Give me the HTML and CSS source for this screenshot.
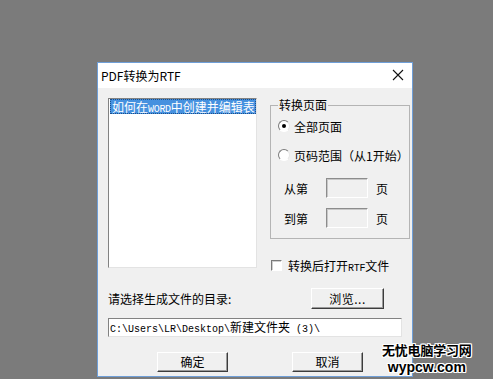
FILE: index.html
```html
<!DOCTYPE html>
<html lang="zh-CN">
<head>
  <meta charset="UTF-8">
  <meta name="viewport" content="width=device-width, initial-scale=1.0">
  <title>PDF转换为RTF</title>
  <link rel="stylesheet" href="styles.css">
</head>
<body>

  <!-- Dialog -->
  <div class="dialog">
    <div class="titlebar">
      <span class="title">PDF转换为RTF</span>
      <svg class="close" width="12" height="12" viewBox="0 0 12 12">
        <path d="M1 1L11 11M11 1L1 11" stroke="#111" stroke-width="1.1" fill="none"/>
      </svg>
    </div>

    <div class="client">
      <div class="top-row">
        <!-- Liste links -->
        <div class="listbox">
          <div class="item selected">如何在<span class="narrow">WORD</span>中创建并编辑表</div>
        </div>

        <!-- Optionen rechts -->
        <div class="side">
          <fieldset class="group">
            <legend>转换页面</legend>
            <div class="option first"><span class="radio checked"></span><span>全部页面</span></div>
            <div class="option second"><span class="radio"></span><span>页码范围（从1开始）</span></div>
            <div class="range first-range">
              <span class="range-label">从第</span>
              <span class="field"></span>
              <span>页</span>
            </div>
            <div class="range">
              <span class="range-label">到第</span>
              <span class="field"></span>
              <span>页</span>
            </div>
          </fieldset>
          <div class="check"><span class="box"></span><span>转换后打开<span class="narrow">RTF</span>文件</span></div>
        </div>
      </div>

      <div class="dir-row">
        <span>请选择生成文件的目录:</span>
        <button class="btn browse">浏览...</button>
      </div>

      <div class="path">C:\Users\LR\Desktop\<span class="cjk">新建文件夹</span> (3)\</div>

      <div class="actions">
        <button class="btn ok">确定</button>
        <button class="btn cancel">取消</button>
      </div>
    </div>
  </div>

  <div class="watermark">
    <div class="wm-cn">无忧电脑学习网</div>
    <div class="wm-en">wypcw.com</div>
  </div>

</body>
</html>
```

FILE: styles.css
```css
/* Reset */
* { box-sizing: border-box; margin: 0; padding: 0; }
body {
  width: 493px;
  height: 379px;
  overflow: hidden;
  background: #7b7b7b;
  font-family: "Noto Sans CJK SC", "DejaVu Sans", sans-serif;
  font-size: 12px;
  color: #000;
  position: relative;
}
/* Fenster */
.dialog {
  margin: 62px 0 0 97px;
  width: 316px;
  height: 315px;
  border: 1px solid #6f9fd8;
  background: #f0f0f0;
  display: flex;
  flex-direction: column;
}
.titlebar {
  height: 25px;
  background: #fff;
  display: flex;
  align-items: center;
  justify-content: space-between;
  padding: 0 8px 0 3px;
}
.title {
  font-size: 12px;
  line-height: 25px;
}
.close { display: block; margin-top: -1px; }
/* Inhalt */
.client {
  flex: 1;
  padding: 10px 9px 0 10px;
}
.top-row {
  display: flex;
  gap: 13px;
}
.listbox {
  width: 149px;
  height: 170px;
  background: #fff;
  border: 1px solid;
  border-color: #828282 #e3e3e3 #e3e3e3 #828282;
  padding: 0 0 0 1px;
}
.item {
  height: 15px;
  line-height: 15px;
  font-size: 12px;
  white-space: nowrap;
  padding-left: 2px;
}
.selected {
  background: #4691df;
  color: #fff;
  outline: 1px dotted #1d4f8a;
  outline-offset: -1px;
}
.narrow {
  font-family: "Liberation Mono", monospace;
  font-size: 10px;
  letter-spacing: -0.3px;
}
.side {
  width: 132px;
}
.group {
  border: 1px solid #b4b4b4;
  padding: 0 0 9px 0;
  height: 141px;
}
.group legend {
  margin-left: 7px;
  padding: 0 1px;
  font-size: 12px;
  line-height: 14px;
}
.option {
  display: flex;
  align-items: center;
  height: 16px;
  padding-left: 7px;
  gap: 4px;
  white-space: nowrap;
}
.option.first { margin-top: 6px; }
.option.second { margin-top: 13px; }
.radio {
  width: 12px;
  height: 12px;
  border-radius: 50%;
  border: 1px solid;
  border-color: #7a7a7a #e6e6e6 #fff #7a7a7a;
  background: #fff;
  display: flex;
  align-items: center;
  justify-content: center;
}
.radio.checked::after {
  content: "";
  width: 4px;
  height: 4px;
  border-radius: 50%;
  background: #000;
}
.range {
  display: flex;
  align-items: center;
  padding-left: 13px;
  margin-top: 10px;
}
.range.first-range { margin-top: 15px; }
.range-label { width: 42px; }
.field {
  width: 42px;
  height: 20px;
  border: 1px solid;
  border-color: #8c8c8c #fff #fff #8c8c8c;
  box-shadow: inset 1px 1px 0 #c8c8c8;
  background: #f0f0f0;
  margin-right: 8px;
}
.check {
  display: flex;
  align-items: center;
  gap: 6px;
  margin-top: 18px;
  padding-left: 1px;
  white-space: nowrap;
}
.box {
  width: 11px;
  height: 11px;
  background: #fff;
  border: 1px solid;
  border-color: #7a7a7a #fff #fff #7a7a7a;
  box-shadow: inset 1px 1px 0 #cfcfcf;
}
/* Verzeichnis */
.dir-row {
  display: flex;
  align-items: center;
  justify-content: space-between;
  margin-top: 14px;
  padding-right: 19px;
}
.btn {
  font-family: "Noto Sans CJK SC", "DejaVu Sans", sans-serif;
  font-size: 12px;
  color: #000;
  background: #f0f0f0;
  border: 1px solid;
  border-color: #fff #3c3c3c #3c3c3c #fff;
  box-shadow: inset -1px -1px 0 #9a9a9a;
  line-height: 1;
}
.browse {
  width: 73px;
  height: 21px;
  letter-spacing: 0.5px;
}
.path {
  margin-top: 9px;
  width: 294px;
  height: 19px;
  background: #fff;
  border: 1px solid;
  border-color: #828282 #e3e3e3 #e3e3e3 #828282;
  font-family: "Liberation Mono", "Noto Sans CJK SC", monospace;
  font-size: 10px;
  line-height: 16px;
  padding-left: 1px;
  white-space: nowrap;
}
.path .cjk {
  font-family: "Noto Sans CJK SC", sans-serif;
  font-size: 12px;
}
/* Buttons unten */
.actions {
  display: flex;
  margin-top: 15px;
  padding-left: 49px;
  gap: 64px;
}
.actions .btn {
  width: 71px;
  height: 20px;
}
/* Wasserzeichen */
.watermark {
  position: absolute;
  left: 382px;
  top: 340px;
  text-align: center;
  font-weight: bold;
  color: #000;
  text-shadow: 1px 0 0 #fff, -1px 0 0 #fff, 0 1px 0 #fff, 0 -1px 0 #fff,
    1px 1px 0 #fff, -1px -1px 0 #fff, 1px -1px 0 #fff, -1px 1px 0 #fff;
}
.wm-cn {
  font-family: "Noto Sans CJK SC", sans-serif;
  font-size: 13px;
  line-height: 19px;
  letter-spacing: -0.2px;
}
.wm-en {
  font-family: "Liberation Sans", sans-serif;
  font-size: 14px;
  line-height: 17px;
}
```
